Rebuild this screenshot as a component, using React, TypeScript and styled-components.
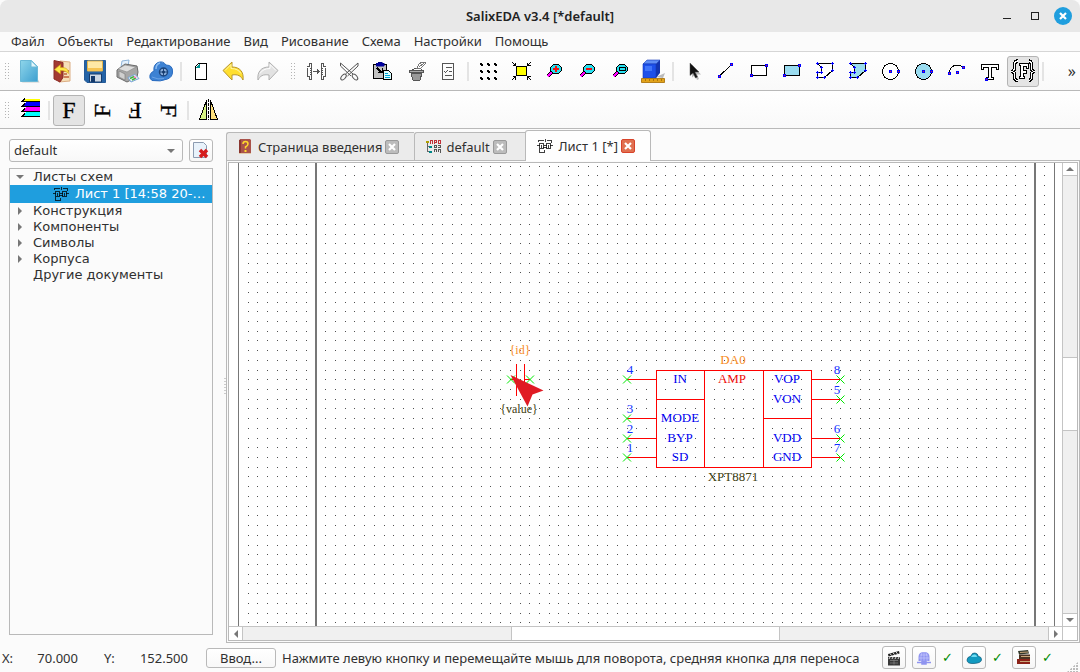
import React from 'react';
import styled, { createGlobalStyle } from 'styled-components';

const Global = createGlobalStyle`
  *, *::before, *::after { box-sizing: border-box; }
  body { margin: 0; background: #fbfbfb; }
  button, select { font: inherit; color: inherit; margin: 0; }
`;

const line = '#b9b9b9';
const ui = `'Noto Sans', 'Open Sans', sans-serif`;

const Window = styled.div`
  display: flex;
  flex-direction: column;
  height: 100vh;
  min-height: 400px;
  overflow: hidden;
  background: #fbfbfb;
  color: #303030;
  font: 13px/18px ${ui};
`;

/* ---------- title bar and menu ---------- */

const TitleBar = styled.header`
  display: grid;
  grid-template-columns: 1fr auto 1fr;
  align-items: center;
  flex: none;
  height: 32px;
  padding: 0 8px;
  background: #e8e8e8;
  border-radius: 8px 8px 0 0;
`;
const Title = styled.h1`
  grid-column: 2;
  margin: 0;
  font-size: 13px;
  font-weight: 600;
  line-height: 18px;
  color: #222;
`;
const WindowControls = styled.div`
  display: flex;
  justify-content: flex-end;
  gap: 10px;
`;
const WindowButton = styled.button<{ $round?: boolean }>`
  display: flex;
  align-items: center;
  justify-content: center;
  width: 18px;
  height: 18px;
  padding: 0;
  border: 0;
  border-radius: 9px;
  background: ${p => (p.$round ? '#1f9ede' : 'transparent')};
`;
const MenuBar = styled.nav`
  display: flex;
  flex: none;
  height: 20px;
  padding: 0 5px;
  border-bottom: 1px solid #d6d6d6;
`;
const MenuItem = styled.button`
  padding: 0 7px 2px 6px;
  border: 0;
  background: none;
  line-height: 16px;
`;

/* ---------- toolbars ---------- */

const ToolBar = styled.div<{ $second?: boolean }>`
  display: flex;
  align-items: center;
  flex: none;
  gap: 1px;
  height: ${p => (p.$second ? 38 : 39)}px;
  padding: ${p => (p.$second ? 2 : 1)}px 0 0 5px;
  border-bottom: 1px solid ${line};
  background: linear-gradient(#fff, #f9f9f9);
`;
const Grip = styled.span<{ $gap?: boolean }>`
  flex: none;
  width: 6px;
  height: 18px;
  margin: 0 ${p => (p.$gap ? 2 : 1)}px 0 ${p => (p.$gap ? 7 : 0)}px;
  background: linear-gradient(#b4b4b4, #b4b4b4) 0 0 / 1px 100%, linear-gradient(#b4b4b4, #b4b4b4) 3px 0 / 1px 100%;
  background-repeat: no-repeat;
  mask: repeating-linear-gradient(#000 0 1px, transparent 1px 3px);
`;
const ToolButton = styled.button<{ $on?: boolean }>`
  display: flex;
  align-items: center;
  justify-content: center;
  flex: none;
  width: 32px;
  height: 31px;
  padding: 0;
  border: 1px solid ${p => (p.$on ? '#b4b4b4' : 'transparent')};
  border-radius: 3px;
  background: ${p => (p.$on ? '#e4e4e4' : 'none')};
  color: #000;
`;
const Separator = styled.span`
  flex: none;
  width: 2px;
  height: 19px;
  margin: 0 2px;
  background: #e4e4e4;
`;
const More = styled.button`
  margin-left: auto;
  padding: 0 4px 2px;
  border: 0;
  background: none;
  font-size: 16px;
  line-height: 18px;
`;
const IconSvg = styled.svg`
  display: block;
  flex: none;
`;

/* ---------- work area ---------- */

const Work = styled.main`
  display: flex;
  flex: 1;
  min-height: 0;
`;
const Sidebar = styled.aside`
  display: flex;
  flex-direction: column;
  flex: none;
  gap: 6px;
  width: 213px;
  padding: 10px 0 8px 9px;
`;
const ProjectRow = styled.div`
  display: flex;
  gap: 6px;
`;
const SelectBox = styled.label`
  display: flex;
  position: relative;
  flex: 1;
  &::after {
    content: '';
    position: absolute;
    right: 8px;
    top: 10px;
    border: 4px solid transparent;
    border-top-color: #777;
    border-bottom: 0;
    pointer-events: none;
  }
`;
const Select = styled.select`
  appearance: none;
  width: 100%;
  height: 23px;
  padding: 0 20px 2px 4px;
  border: 1px solid ${line};
  border-radius: 3px;
  background: linear-gradient(#fff, #f8f8f8);
`;
const SmallButton = styled.button`
  display: flex;
  align-items: center;
  justify-content: center;
  flex: none;
  width: 24px;
  height: 23px;
  padding: 0;
  border: 1px solid ${line};
  border-radius: 3px;
  background: linear-gradient(#fff, #f6f6f6);
`;
const Tree = styled.ul`
  flex: 1;
  min-height: 0;
  margin: 0;
  padding: 0;
  list-style: none;
  overflow: hidden;
  border: 1px solid ${line};
  font: 13px/16px 'DejaVu Sans', sans-serif;
`;
const TreeRow = styled.button<{ $selected?: boolean }>`
  display: flex;
  align-items: center;
  width: 100%;
  height: ${p => (p.$selected ? 18 : 16)}px;
  padding: 0 0 0 ${p => (p.$selected ? 43 : 6)}px;
  border: 0;
  gap: ${p => (p.$selected ? 6 : 0)}px;
  background: ${p => (p.$selected ? '#1f9ede' : 'none')};
  color: ${p => (p.$selected ? '#fff' : '#303030')};
  white-space: nowrap;
`;
const Twisty = styled.span<{ $state: 'open' | 'closed' | 'none' }>`
  flex: none;
  width: 17px;
  height: 8px;
  &::before {
    content: '';
    display: block;
    width: 0;
    height: 0;
    border: 4px solid transparent;
    ${p => p.$state === 'open' && 'border-top-color: #777; margin-top: 2px;'}
    ${p => p.$state === 'closed' && 'border-left-color: #777; margin-left: 2px;'}
  }
`;
const Splitter = styled.div`
  display: flex;
  align-items: center;
  justify-content: flex-end;
  flex: none;
  width: 13px;
  &::after {
    content: '';
    width: 2px;
    height: 17px;
    background: repeating-linear-gradient(#ccc 0 1px, transparent 1px 3px);
  }
`;
const Editor = styled.section`
  display: flex;
  flex-direction: column;
  flex: 1;
  min-width: 0;
  padding-top: 1px;
`;
const Tabs = styled.div`
  display: flex;
  align-items: flex-end;
  flex: none;
  height: 30px;
`;
const Tab = styled.div<{ $active?: boolean }>`
  display: flex;
  align-items: center;
  height: ${p => (p.$active ? 31 : 28)}px;
  min-width: 112px;
  margin-bottom: ${p => (p.$active ? -1 : 0)}px;
  margin-left: ${p => (p.$active ? -1 : 0)}px;
  padding: 0 15px 0 11px;
  border: 1px solid ${line};
  border-right-width: ${p => (p.$active ? 1 : 0)}px;
  border-bottom: 0;
  border-radius: ${p => (p.$active ? '3px 3px 0 0' : '3px 0 0 0')};
  background: ${p => (p.$active ? '#fefefe' : '#ebebeb')};
  position: relative;
`;
const TabLabel = styled.button`
  display: flex;
  align-items: center;
  gap: 5px;
  padding: 0;
  border: 0;
  background: none;
  white-space: nowrap;
`;
const TabClose = styled.button<{ $active?: boolean }>`
  display: flex;
  align-items: center;
  justify-content: center;
  width: 14px;
  height: 14px;
  margin-left: 3px;
  padding: 0;
  border: 1px solid ${p => (p.$active ? '#d8432a' : '#9a9a9a')};
  border-radius: 2px;
  background: ${p => (p.$active ? '#e07050' : '#bcbcbc')};
`;
const Pane = styled.div`
  display: flex;
  flex: 1;
  min-height: 0;
  padding: 1px;
  border: 1px solid ${line};
`;
const PaneInner = styled.div`
  display: grid;
  grid-template-columns: 1fr 15px;
  grid-template-rows: 1fr 14px;
  flex: 1;
  min-width: 0;
  border: 1px solid ${line};
  background: #fff;
`;
const Canvas = styled.div`
  overflow: hidden;
  min-width: 0;
  min-height: 0;
  background: #fff;
`;
const Sheet = styled.svg`
  display: block;
  width: 100%;
  height: 100%;
`;
const ScrollTrack = styled.div<{ $vertical?: boolean }>`
  display: flex;
  flex-direction: ${p => (p.$vertical ? 'column' : 'row')};
  min-width: 0;
  min-height: 0;
  border: 0 solid #c4c4c4;
  border-left-width: ${p => (p.$vertical ? 1 : 0)}px;
  border-top-width: ${p => (p.$vertical ? 0 : 1)}px;
  background: #f0f0f0;
`;
const ScrollArrow = styled.button<{ $dir: 'up' | 'down' | 'left' | 'right' }>`
  display: flex;
  align-items: center;
  justify-content: center;
  flex: none;
  width: 14px;
  height: 13px;
  padding: 0;
  border: 0 solid #c4c4c4;
  ${p => p.$dir === 'up' && 'border-bottom-width: 1px;'}
  ${p => p.$dir === 'down' && 'border-top-width: 1px;'}
  ${p => p.$dir === 'left' && 'border-right-width: 1px;'}
  ${p => p.$dir === 'right' && 'border-left-width: 1px;'}
  background: #fff;
`;
const Thumb = styled.div<{ $start: number; $size: number; $end: number; $vertical?: boolean }>`
  display: grid;
  flex: 1;
  min-width: 0;
  min-height: 0;
  grid-template-${p => (p.$vertical ? 'rows' : 'columns')}: ${p => `${p.$start}fr ${p.$size}fr ${p.$end}fr`};
  &::before, &::after { content: ''; }
  & > span {
    background: #fff;
    border: 0 solid #c4c4c4;
    border-width: ${p => (p.$vertical ? '1px 0' : '0 1px')};
  }
`;
const Corner = styled.div`
  border: solid #c4c4c4;
  border-width: 1px 0 0 1px;
`;

/* ---------- status bar ---------- */

const StatusBar = styled.footer`
  display: flex;
  align-items: center;
  flex: none;
  height: 29px;
  padding: 0 2px;
`;
const Axis = styled.span`
  width: 22px;
`;
const Coord = styled.output<{ $last?: boolean }>`
  width: ${p => (p.$last ? 62 : 54)}px;
  margin-right: ${p => (p.$last ? 18 : 26)}px;
  text-align: right;
`;
const InputButton = styled.button`
  width: 70px;
  height: 20px;
  margin-right: 6px;
  padding: 0;
  border: 1px solid ${line};
  border-radius: 3px;
  background: linear-gradient(#fff, #f8f8f8);
  line-height: 18px;
`;
const Message = styled.span`
  flex: 1;
  min-width: 0;
  overflow: hidden;
  white-space: nowrap;
`;
const StatusTools = styled.div`
  display: flex;
  align-items: center;
  flex: none;
  gap: 6px;
`;
const Check = styled.span`
  width: 10px;
  margin-right: 4px;
  color: #008a00;
  font: 13px/16px 'DejaVu Sans', sans-serif;
  text-align: center;
`;
const SizeGrip = styled.span`
  align-self: flex-end;
  width: 11px;
  height: 10px;
  margin-left: 11px;
  background: radial-gradient(circle at 1px 1px, #bbb 1px, transparent 1px) 0 0 / 3px 3px;
  clip-path: polygon(100% 0, 100% 100%, 0 100%);
`;

/* ---------- icons ---------- */

const Px = ({ children, smooth }: { children: React.ReactNode; smooth?: boolean }) => (
  <IconSvg width="24" height="25" viewBox="0 0 24 25" fill="none" stroke="#000" shapeRendering={smooth ? 'auto' : 'crispEdges'}>
    {children}
  </IconSvg>
);
const Node = ({ x, y }: { x: number; y: number }) => (
  <rect x={x - 1} y={y - 1} width="2" height="2" fill="#f02020" stroke="#0000ff" />
);

const NewIcon = () => (
  <Px smooth>
    <defs><linearGradient id="nw" x2="1" y2="1"><stop stopColor="#8fd6ea" /><stop offset="1" stopColor="#3d9fd0" /></linearGradient></defs>
    <path d="M4.500 23.500h18l-3-6z" fill="#ccc" stroke="none" />
    <path d="M3.500 1.500h11l6 6v15h-17z" fill="url(#nw)" stroke="#6ab8d6" />
    <path d="M14 1.500v6.500h6.500z" fill="#e2f6fb" stroke="#6ab8d6" />
  </Px>
);
const OpenIcon = () => (
  <Px smooth>
    <path d="M10 2l10 1v19l-11 1z" fill="#f6dfb8" stroke="#dcae84" />
    <path d="M14 18h5M13 12h6M14 15h3" stroke="#c0613a" strokeWidth="1.500" />
    <path d="M4 1.500l9 2v15l-3 4.500-6-3z" fill="#a33a32" stroke="#8b2b25" />
    <path d="M4.500 10.500l6-5v3c5 0 8 1 8 6-2-2-4-3-8-3v3.500z" fill="#ffe84a" stroke="#d0a010" strokeWidth=".6" />
  </Px>
);
const SaveIcon = () => (
  <Px smooth>
    <path d="M1.500 1.500h21v22H4l-2.500-2.500z" fill="#2463a6" stroke="#255b98" />
    <path d="M4.500 2h15v10h-15z" fill="#ffe9a6" stroke="#e3b44c" />
    <path d="M5 9h14v3H5z" fill="#f6c453" stroke="none" />
    <path d="M6.500 15h12v8h-12z" fill="#cdd8e4" stroke="#143a6b" />
    <path d="M8 17h4v6H8z" fill="#143a6b" stroke="none" />
  </Px>
);
const PrintIcon = () => (
  <Px smooth>
    <path d="M5 8l1-6 7-1-1 7z" fill="#e4f1fd" stroke="#8fb4d9" />
    <path d="M1 11l8-6 12 2 1 6-1 5-10 5-10-5z" fill="#a6a6a6" stroke="#6a6a6a" />
    <path d="M2 10l7-4 11 2-9 5z" fill="#dedede" stroke="#888" strokeWidth=".6" />
    <path d="M3 12l6 3v6l-6-3z" fill="#cfcfcf" stroke="#777" strokeWidth=".6" />
    <path d="M12 18.500l7-3 4 4-8 3.500z" fill="#e9f4fb" stroke="#7ba4d6" />
    <path d="M14 19.500l4-2M16 21l4-2" stroke="#45b23c" strokeWidth="1.500" />
    <path d="M18 17.500l2 1.500" stroke="#ff6bb5" strokeWidth="1.500" />
  </Px>
);
const CloudIcon = () => (
  <Px smooth>
    <path d="M3 21.500q-3-2-2-5.500 1-3 4-4-1-6 4-8.500 5-2 8 2.500 7 0 6.500 7 0 5-5 7-7 3-15.500 1.500z" fill="#3d82d3" stroke="#2a6cc0" />
    <path d="M7 10q0-5 4-6" stroke="#8bbcf2" strokeWidth="1.500" />
    <circle cx="14.500" cy="13" r="4" fill="#8fb2dd" stroke="#1b467f" strokeWidth="1.500" />
    <path d="M14.500 9v8M10.500 13h8" stroke="#1b467f" />
    <circle cx="14.500" cy="13" r="1.500" fill="#163a6b" stroke="none" />
    <path d="M3 18q6 3 12 1.500" stroke="#6aa2e6" />
  </Px>
);
const PageIcon = () => (
  <Px>
    <path d="M9.500 4.500h8v16h-11v-13z" fill="#fff" strokeWidth="1" />
    <path d="M10.500 5v3.500H7z" fill="#009090" stroke="none" />
    <path d="M6.500 7.500l3-3" />
  </Px>
);
const UndoIcon = () => (
  <Px smooth>
    <path d="M1 11.500L10 3v5c8 0 12 5 11 13-2-4-5-6-11-5v5z" fill="#ffdf2e" stroke="#b8952a" />
    <path d="M3 11.500l6-6v4q7 0 10 5" stroke="#fff6a8" />
  </Px>
);
const RedoIcon = () => (
  <Px smooth>
    <path d="M23 11.500L14 3v5C6 8 2 13 3 21c2-4 5-6 11-5v5z" fill="#e2e2e2" stroke="#b0b0b0" />
    <path d="M21 11.500l-6-6v4q-7 0-10 5" stroke="#fff" />
  </Px>
);
const MirrorToolIcon = () => (
  <Px>
    <g stroke="#555">
      <path d="M7.500 4v17M17.500 4v17M3.500 8.500v8M21.500 8.500v8" />
      <path d="M7 4.500H5.500v3H3M18 4.500h1.500v3H22M7 20.500H5.500v-3H3M18 20.500h1.500v-3H22" />
      <path d="M6.500 9v8M18.500 9v8" strokeDasharray="1 1" />
      <path d="M9 12.500h6" />
      <path d="M13 9.500l3 3-3 3z" fill="#555" stroke="none" />
    </g>
  </Px>
);
const CutIcon = () => (
  <Px smooth>
    <g stroke="#555" strokeWidth="1">
      <path d="M3.500 4v3l10.500 10M3.500 4l12.500 11M21 4v3L10.500 17M21 4L8.500 15" />
      <ellipse cx="6.500" cy="18" rx="2" ry="3.500" transform="rotate(40 6.500 18)" />
      <ellipse cx="18" cy="18" rx="2" ry="3.500" transform="rotate(-40 18 18)" />
    </g>
  </Px>
);
const PasteIcon = () => (
  <Px>
    <path d="M3.500 5.500h13v14h-13z" fill="#c3c3c3" />
    <path d="M6 4h2V3h4v1h2v3H6z" fill="#0000a0" stroke="#000080" strokeWidth=".5" />
    <path d="M7 9l5 5" strokeWidth="2" />
    <path d="M8 13.500h4.500V9" />
    <path d="M13.500 11.500h5l3 3v6h-8z" fill="#dff" />
    <path d="M15 14.500h3M15 16.500h5M15 18.500h5" stroke="#00a8d8" />
  </Px>
);
const BinIcon = () => (
  <Px>
    <g stroke="#555">
      <path d="M6.500 11.500h14v2h-14z" fill="#aaa" />
      <path d="M8 14h11l-2 7h-7z" fill="#999" />
      <path d="M8 11.500q6-4 11-1" />
    </g>
    <path d="M14 9l2-4 3-2h3v2l-4 4zM16 8l5-4" fill="#fff" stroke="#777" />
  </Px>
);
const ListIcon = () => (
  <Px>
    <path d="M6.500 4.500h11v16h-11zM10 8.500h6M13 12.500h3M9 16.500h7M8 12l1.500 1.500L12 11" stroke="#555" />
  </Px>
);
const GridIcon = () => (
  <Px>
    {[4, 11, 18].flatMap(x => [4, 11, 18].map(y => <path key={`${x}-${y}`} d={`M${x} ${y}h2v1h1v2h-2v-1h-1z`} fill="#000" stroke="none" />))}
  </Px>
);
const FitIcon = () => (
  <Px>
    <rect x="7.500" y="7.500" width="10" height="9" fill="#ff0" strokeWidth="1" />
    <path d="M3 3l4 4M22 3l-4 4M3 21l4-4M22 21l-4-4M3.500 6.500h3V3.500M21.500 6.500h-3V3.500M3.500 17.500h3v3M21.500 17.500h-3v3" />
  </Px>
);
const LensIcon = ({ kind }: { kind: 'plus' | 'minus' | 'fit' }) => (
  <Px>
    <path d="M5.500 17.500l5-5" strokeWidth="4" />
    <path d="M5.500 17.500l4-4" stroke="#ff00ff" strokeWidth="2.500" />
    <path d="M11.500 5.500h5l3 3v3l-3 3h-5l-3-3v-3z" fill="#27e0f0" />
    {kind === 'fit' ? <rect x="11.500" y="8.500" width="6" height="3" /> : <path d="M11 10h6" stroke="#f01010" strokeWidth="2" />}
    {kind === 'plus' && <path d="M14 7v6" stroke="#f01010" strokeWidth="2" />}
  </Px>
);
const BoxIcon = () => (
  <Px smooth>
    <path d="M15 18l9-4-2 5z" fill="#bbb" stroke="none" />
    <path d="M2 5l4-4h13l-4 4z" fill="#5f8ef4" stroke="#1338b8" strokeWidth=".6" />
    <path d="M15 5l4-4v13l-4 5z" fill="#1335b0" stroke="none" />
    <path d="M2 5h13v14H2z" fill="#1d50ea" stroke="#1338b8" strokeWidth=".6" />
    <path d="M4 7h7v5H4z" fill="#3f74fa" stroke="none" />
    <path d="M.5 19.500h23v4H.5z" fill="#e2a31a" stroke="#a56b00" strokeWidth=".8" />
    <path d="M4.500 20v2M8.500 20v2M12.500 20v2M16.500 20v2M20.500 20v2" stroke="#8a5800" strokeWidth=".6" />
  </Px>
);
const CursorIcon = () => (
  <Px smooth>
    <path d="M11 5.500v13l3-2.500 2 5 2-1-2-4.500h4z" fill="#bbb" stroke="none" />
    <path d="M9 4v12.500l3-2.500 2.500 5 2-1-2.500-5h4z" fill="#111" stroke="#555" strokeWidth=".5" />
  </Px>
);
const LineIcon = () => (
  <Px><path d="M5 17.500L17.500 5.500" /><Node x={5.5} y={17.5} /><Node x={17.5} y={5.5} /></Px>
);
const RectIcon = ({ fill }: { fill?: boolean }) => (
  <Px><rect x="4.500" y="6.500" width="15" height="10" fill={fill ? '#9adcf0' : '#fff'} /><Node x={19.5} y={6.5} /><Node x={4.5} y={16.5} /></Px>
);
const polyPoints = [[4.5, 4.5], [19.5, 4.5], [19.5, 11.5], [11.5, 18.5], [4.5, 18.5], [4.5, 13.5], [8.5, 13.5], [8.5, 8.5]];
const PolyIcon = ({ fill }: { fill?: boolean }) => (
  <Px>
    <polygon points={polyPoints.map(p => p.join(',')).join(' ')} fill={fill ? '#9adcf0' : '#fff'} />
    <path d={polyPoints.map(([x, y]) => `M${x - 1.5} ${y}h3M${x} ${y - 1.5}v3`).join('')} stroke="#0000ff" />
  </Px>
);
const CircleIcon = ({ fill }: { fill?: boolean }) => (
  <Px><circle cx="11.500" cy="12.500" r="8" fill={fill ? '#9adcf0' : '#fff'} /><Node x={11.5} y={12.5} /><Node x={19.5} y={12.5} /></Px>
);
const ArcIcon = () => (
  <Px><path d="M4.500 14Q5 6.500 12 6q4 0 6 3" /><Node x={4.5} y={14.5} /><Node x={18.5} y={8.5} /><Node x={12.5} y={13.5} /></Px>
);
const TextIcon = () => (
  <Px>
    <path d="M3.500 5.500h17v5h-2v-2h-5v10h2v2h-7v-2h2v-10h-5v2h-2z" fill="#fff" />
    <Node x={8.5} y={20.5} />
  </Px>
);
const braces = 'M6.500 2q-3 0-3 4v3q0 2-2 3.500 2 1 2 3v2q0 4 3 4M17.500 2q3 0 3 4v3q0 2 2 3.500-2 1-2 3v2q0 4-3 4';
const FieldIcon = () => (
  <Px>
    <path d={braces} strokeWidth="3.500" />
    <path d={braces} stroke="#fff" strokeWidth="1.200" />
    <path d="M8.500 4.500h9v5h-2v-2h-3v4h3v3h-3v3h1v2h-5v-2h1v-11h-1z" fill="#fff" />
  </Px>
);
const LayersIcon = () => (
  <Px>
    {['#ffff00', '#0000ff', '#ff00ff', '#00ffff'].map((c, i) => (
      <g key={c}>
        <path d={i === 0 ? 'M7 1h16v2H5z' : `M9 ${i * 5 - 1}h14v4H5z`} fill={c} stroke="none" />
        <path d={`M23 ${3.5 + i * 5}H5l3-3`} />
      </g>
    ))}
  </Px>
);
const LetterIcon = ({ turn }: { turn: number }) => (
  <Px smooth>
    <text x="12" y="20" textAnchor="middle" transform={`rotate(${turn} 12 12.500)`} fontFamily="'Liberation Serif', serif" fontSize="24" fill="#000" strokeWidth=".3">F</text>
  </Px>
);
const FlipIcon = () => (
  <Px>
    <path d="M10.500 2.500v19h-7z" fill="#d8f585" />
    <path d="M14.500 2.500v19h7z" fill="#ffe07c" />
    <path d="M12.500 1v21" strokeDasharray="3 1" />
  </Px>
);

const SheetIcon = () => (
  <IconSvg width="16" height="14" viewBox="0 0 16 14" fill="none" stroke="#000" strokeOpacity=".75" shapeRendering="crispEdges">
    <path d="M0 6.500h3M13 6.500h3M7 6.500h3M2.500 10v3.500h5v-3M1.500 3v-1.500h5M8 2.500V0M10 1.500h4.500V4" />
    <path d="M2.500 4.500h4v5h-4zM9.500 4.500h4v5h-4z" />
    <path d="M4.500 5.500v3M11.500 5.500v3M6 8.500h4" />
  </IconSvg>
);
const HelpIcon = () => (
  <IconSvg width="15" height="16" viewBox="0 0 15 16">
    <path d="M2 0h10l1 1v13l-1 1H1V2z" fill="#a9534b" />
    <path d="M1 14h12v1H1z" fill="#e2c9a5" />
    <path d="M1 1h2v13H1z" fill="#8a3630" />
    <path d="M5 5q0-2.500 2.500-2.500T10 5q0 1.500-2.500 3v1.500" fill="none" stroke="#ffd92c" strokeWidth="1.500" />
    <path d="M6.500 11h2v2h-2z" fill="#ffd92c" />
  </IconSvg>
);
const ProjectIcon = () => (
  <IconSvg width="15" height="14" viewBox="0 0 15 14" fill="none" shapeRendering="crispEdges">
    <path d="M0 1h3v2H0z" fill="#b0a000" />
    <path d="M1.500 3v8.500H6M1.500 6.500H6" stroke="#666" />
    <path d="M3 5.500h3v2H3zM3 10.500h3v2H3z" fill="#088" />
    <path d="M4.500 4V.500h2V4M8.500 4V.500h2v2h-2M12.500 .500h2v3h-2z" stroke="#c03038" />
    <path d="M8.500 5.500h2v2h-2zM12 5.500h2v2h-2M8 12v-2.500h2V12M12 12v-2.500h2V13" stroke="#555" />
  </IconSvg>
);
const CloseDocIcon = () => (
  <IconSvg width="18" height="17" viewBox="0 0 18 17">
    <path d="M1.500.5h10l3 3v12h-13z" fill="#e8f2fb" stroke="#8c9bb0" />
    <path d="M8 8l7 7M15 8l-7 7" stroke="#d51c1c" strokeWidth="3.500" />
  </IconSvg>
);
const Cross = () => (
  <IconSvg width="8" height="8" viewBox="0 0 8 8"><path d="M1 1l6 6M7 1L1 7" stroke="#fff" strokeWidth="2.200" /></IconSvg>
);
const arrowShapes = { up: 'M0 6l4-4 4 4z', down: 'M0 2l4 4 4-4z', left: 'M6 0L2 4l4 4z', right: 'M2 0l4 4-4 4z' };
const Arrow = ({ dir }: { dir: keyof typeof arrowShapes }) => (
  <ScrollArrow $dir={dir} aria-label={dir}>
    <IconSvg width="8" height="8" viewBox="0 0 8 8"><path d={arrowShapes[dir]} fill="#777" /></IconSvg>
  </ScrollArrow>
);

const ClapIcon = () => (
  <IconSvg width="14" height="16" viewBox="0 0 14 16">
    <path d="M1 4l11-3 .6 2.500L1.500 6.500z" fill="#222" /><path d="M1 7h12v8.500H1z" fill="#383838" />
    <path d="M3 3.500l1.500 2M6 2.700L7.500 4.700M9 1.900l1.500 2M3 7l-1 2M6 7l-1 2M9 7L8 9M12 7l-1 2" stroke="#ddd" />
    <path d="M3 10.500h8M3 13h8M7 9.500v5" stroke="#888" strokeWidth=".7" />
  </IconSvg>
);
const GlobeIcon = () => (
  <IconSvg width="16" height="14" viewBox="0 0 16 14">
    <path d="M2.500 10V6q0-5 5.500-5t5.500 5v4z" fill="#8f94f0" />
    <path d="M8 1v9M4 4h8M3 7h10M6 1.500Q4.500 5 5 10M10 1.500q1.500 3.500 1 8.500" stroke="#c5c8ff" fill="none" strokeWidth=".7" />
    <path d="M1 11.500h14M6 10.500h4v2.500H6z" stroke="#8f94f0" fill="#b4b8ff" strokeWidth="1.500" />
  </IconSvg>
);
const DropIcon = () => (
  <IconSvg width="16" height="12" viewBox="0 0 16 12">
    <path d="M1 8q0-3 4-4 1-3.500 4-3 3 .5 3 3 4 1 3.500 4T8 11.500 1 8z" fill="#129ac0" stroke="#0a5878" strokeWidth=".7" />
    <path d="M5 5q1-3 4-2.500 2 .5 2 2.500z" fill="#6fdcf2" />
  </IconSvg>
);
const BooksIcon = () => (
  <IconSvg width="16" height="15" viewBox="0 0 16 15">
    <path d="M2 1l10-1 1 3.500-10 1z" fill="#33392c" />
    <path d="M3 4.500h11v4.500H3z" fill="#4b3323" />
    <path d="M1 9h13v5H1z" fill="#8c2218" />
    <path d="M4 2.500l8-.5M5 6.500h9M4 11.500h10" stroke="#c9a578" strokeWidth="1.200" />
  </IconSvg>
);

/* ---------- schematic drawing ---------- */

const STEP = 9.718;
const gridPath = (() => {
  let d = '';
  for (let r = 0; r < 120; r++)
    for (let c = 0; c < 83; c++) d += `M${Math.floor(19 + c * STEP)} ${Math.floor(3 + r * STEP)}h1v1h-1z`;
  return d;
})();

type Pin = { n: string; label: string; y: number; right?: boolean };
const pins: Pin[] = [
  { n: '4', label: 'IN', y: 216 },
  { n: '3', label: 'MODE', y: 255 },
  { n: '2', label: 'BYP', y: 275 },
  { n: '1', label: 'SD', y: 294 },
  { n: '8', label: 'VOP', y: 216, right: true },
  { n: '5', label: 'VON', y: 236, right: true },
  { n: '6', label: 'VDD', y: 275, right: true },
  { n: '7', label: 'GND', y: 294, right: true },
];
const Label = styled.text<{ $small?: boolean }>`
  font: ${p => (p.$small ? 12 : 13)}px 'Liberation Serif', serif;
  text-anchor: middle;
`;
const cross = (x: number, y: number) => `M${x - 4} ${y - 4}l8 8M${x + 4} ${y - 4}l-8 8`;

const Schematic = () => (
  <Sheet>
    <g shapeRendering="crispEdges" fill="none">
      <path d={gridPath} fill="#505050" />
      <path d="M9.500 0v2000M825.500 0v2000" stroke="#777" />
      <path d="M87 0v2000M806 0v2000" stroke="#777" strokeWidth="2" />
      <path d="M427.500 207.500h155v97h-155zM475.500 207.500v97M534.500 207.500v97M427.500 236.500h48M534.500 255.500h48" stroke="#f00" />
      <path d="M287.500 201v32M295.500 201v32M282 216.500h5M296 216.500h5" stroke="#f00" />
    </g>
    {pins.map(p => {
      const tip = p.right ? 611.5 : 398;
      return (
        <g key={p.n}>
          <path d={p.right ? `M583 ${p.y + 0.5}h28` : `M398 ${p.y + 0.5}h29`} stroke="#f00" shapeRendering="crispEdges" />
          <path d={cross(tip, p.y + 0.5)} stroke="#00e800" />
          <Label x={p.right ? 608 : 401} y={p.y - 5} fill="#1030ff">{p.n}</Label>
          <Label x={p.right ? 558 : 451} y={p.y + 4} fill="#0000f0">{p.label}</Label>
        </g>
      );
    })}
    <Label x={504} y={201} fill="#f78a1a">DA0</Label>
    <Label x={503} y={220} fill="#f01010">AMP</Label>
    <Label x={504} y={318} fill="#404010">XPT8871</Label>
    <path d={cross(282, 216.5) + cross(301, 216.5)} stroke="#00e800" />
    <Label $small x={291} y={191} fill="#f78a1a">{'{id}'}</Label>
    <Label $small x={290} y={250} fill="#404010">{'{value}'}</Label>
    <path d="M281.500 212l33 15.500-11 4-5 12z" fill="#e01b24" />
  </Sheet>
);

/* ---------- page ---------- */

const Tool = ({ name, icon, on }: { name: string; icon: React.ReactNode; on?: boolean }) => (
  <ToolButton $on={on} aria-label={name} aria-pressed={on}>{icon}</ToolButton>
);

const menu = ['Файл', 'Объекты', 'Редактирование', 'Вид', 'Рисование', 'Схема', 'Настройки', 'Помощь'];
const folders = ['Конструкция', 'Компоненты', 'Символы', 'Корпуса'];

export default function App() {
  return (
    <Window>
      <Global />
      <TitleBar>
        <Title>SalixEDA v3.4 [*default]</Title>
        <WindowControls>
          <WindowButton aria-label="Свернуть"><IconSvg width="8" height="6"><path d="M0 5.500h8" stroke="#222" /></IconSvg></WindowButton>
          <WindowButton aria-label="Развернуть"><IconSvg width="8" height="8"><rect x=".5" y=".5" width="7" height="7" fill="none" stroke="#222" /></IconSvg></WindowButton>
          <WindowButton $round aria-label="Закрыть"><Cross /></WindowButton>
        </WindowControls>
      </TitleBar>
      <MenuBar>{menu.map(m => <MenuItem key={m}>{m}</MenuItem>)}</MenuBar>

      <ToolBar role="toolbar">
        <Grip />
        <Tool name="Новый" icon={<NewIcon />} />
        <Tool name="Открыть" icon={<OpenIcon />} />
        <Tool name="Сохранить" icon={<SaveIcon />} />
        <Tool name="Печать" icon={<PrintIcon />} />
        <Tool name="Облако" icon={<CloudIcon />} />
        <Separator />
        <Tool name="Страница" icon={<PageIcon />} />
        <Tool name="Отменить" icon={<UndoIcon />} />
        <Tool name="Вернуть" icon={<RedoIcon />} />
        <Grip $gap />
        <Tool name="Сдвинуть" icon={<MirrorToolIcon />} />
        <Tool name="Вырезать" icon={<CutIcon />} />
        <Tool name="Вставить" icon={<PasteIcon />} />
        <Tool name="Удалить" icon={<BinIcon />} />
        <Tool name="Свойства" icon={<ListIcon />} />
        <Separator />
        <Tool name="Сетка" icon={<GridIcon />} />
        <Tool name="Вписать" icon={<FitIcon />} />
        <Tool name="Увеличить" icon={<LensIcon kind="plus" />} />
        <Tool name="Уменьшить" icon={<LensIcon kind="minus" />} />
        <Tool name="Масштаб окна" icon={<LensIcon kind="fit" />} />
        <Tool name="3D" icon={<BoxIcon />} />
        <Separator />
        <Tool name="Выбор" icon={<CursorIcon />} />
        <Tool name="Линия" icon={<LineIcon />} />
        <Tool name="Прямоугольник" icon={<RectIcon />} />
        <Tool name="Залитый прямоугольник" icon={<RectIcon fill />} />
        <Tool name="Многоугольник" icon={<PolyIcon />} />
        <Tool name="Залитый многоугольник" icon={<PolyIcon fill />} />
        <Tool name="Окружность" icon={<CircleIcon />} />
        <Tool name="Круг" icon={<CircleIcon fill />} />
        <Tool name="Дуга" icon={<ArcIcon />} />
        <Tool name="Текст" icon={<TextIcon />} />
        <Tool name="Поле" icon={<FieldIcon />} on />
        <Separator />
        <More aria-label="Ещё">»</More>
      </ToolBar>
      <ToolBar role="toolbar" $second>
        <Grip />
        <Tool name="Слои" icon={<LayersIcon />} />
        <Separator />
        <Tool name="0°" icon={<LetterIcon turn={0} />} on />
        <Tool name="90°" icon={<LetterIcon turn={-90} />} />
        <Tool name="180°" icon={<LetterIcon turn={180} />} />
        <Tool name="270°" icon={<LetterIcon turn={90} />} />
        <Separator />
        <Tool name="Отразить" icon={<FlipIcon />} />
      </ToolBar>

      <Work>
        <Sidebar>
          <ProjectRow>
            <SelectBox><Select aria-label="Проект"><option>default</option></Select></SelectBox>
            <SmallButton aria-label="Закрыть проект"><CloseDocIcon /></SmallButton>
          </ProjectRow>
          <Tree>
            <li><TreeRow><Twisty $state="open" />Листы схем</TreeRow></li>
            <li><TreeRow $selected><SheetIcon />Лист 1 [14:58 20-…</TreeRow></li>
            {folders.map(f => <li key={f}><TreeRow><Twisty $state="closed" />{f}</TreeRow></li>)}
            <li><TreeRow><Twisty $state="none" />Другие документы</TreeRow></li>
          </Tree>
        </Sidebar>
        <Splitter />
        <Editor>
          <Tabs>
            <Tab><TabLabel><HelpIcon />Страница введения</TabLabel><TabClose aria-label="Закрыть"><Cross /></TabClose></Tab>
            <Tab><TabLabel><ProjectIcon />default</TabLabel><TabClose aria-label="Закрыть"><Cross /></TabClose></Tab>
            <Tab $active><TabLabel><SheetIcon />Лист 1 [*]</TabLabel><TabClose $active aria-label="Закрыть"><Cross /></TabClose></Tab>
          </Tabs>
          <Pane>
            <PaneInner>
              <Canvas><Schematic /></Canvas>
              <ScrollTrack $vertical>
                <Arrow dir="up" />
                <Thumb $vertical $start={181} $size={74} $end={182}><span /></Thumb>
                <Arrow dir="down" />
              </ScrollTrack>
              <ScrollTrack>
                <Arrow dir="left" />
                <Thumb $start={268} $size={270} $end={268}><span /></Thumb>
                <Arrow dir="right" />
              </ScrollTrack>
              <Corner />
            </PaneInner>
          </Pane>
        </Editor>
      </Work>

      <StatusBar>
        <Axis>X:</Axis><Coord>70.000</Coord>
        <Axis>Y:</Axis><Coord $last>152.500</Coord>
        <InputButton>Ввод...</InputButton>
        <Message>Нажмите левую кнопку и перемещайте мышь для поворота, средняя кнопка для переноса</Message>
        <StatusTools>
          <SmallButton aria-label="Запись"><ClapIcon /></SmallButton>
          <SmallButton aria-label="Сеть"><GlobeIcon /></SmallButton><Check>✓</Check>
          <SmallButton aria-label="Облако"><DropIcon /></SmallButton><Check>✓</Check>
          <SmallButton aria-label="Библиотека"><BooksIcon /></SmallButton><Check>✓</Check>
        </StatusTools>
        <SizeGrip />
      </StatusBar>
    </Window>
  );
}
